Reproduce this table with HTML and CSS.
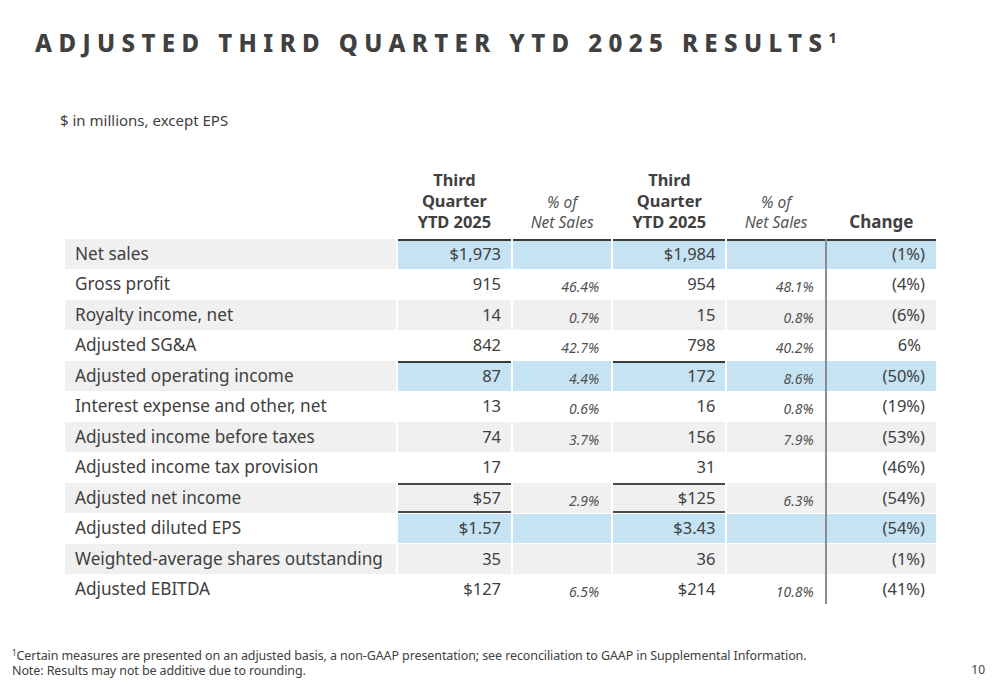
FILE: index.html
```html
<!DOCTYPE html>
<html>
<head>
<meta charset="utf-8">
<link rel="stylesheet" href="styles.css">
</head>
<body>
<div class="page">
  <h1 class="title">ADJUSTED THIRD QUARTER YTD 2025 RESULTS<sup class="title-sup">1</sup></h1>
  <p class="subtitle">$ in millions, except EPS</p>
  <table class="results">
    <colgroup>
      <col class="c-label"><col class="c-val"><col class="c-pct"><col class="c-val2"><col class="c-pct2"><col class="c-chg">
    </colgroup>
    <thead>
      <tr>
        <th></th>
        <th class="h-main">Third<br>Quarter<br>YTD 2025</th>
        <th class="h-pct">% of<br>Net Sales</th>
        <th class="h-main">Third<br>Quarter<br>YTD 2025</th>
        <th class="h-pct">% of<br>Net Sales</th>
        <th class="h-main h-chg">Change</th>
      </tr>
    </thead>
    <tbody>
      <tr class="gray hl top-all">
        <td class="lbl">Net sales</td><td class="val">$1,973</td><td class="pct"></td><td class="val">$1,984</td><td class="pct"></td><td class="chg">(1%)</td>
      </tr>
      <tr>
        <td class="lbl">Gross profit</td><td class="val">915</td><td class="pct">46.4%</td><td class="val">954</td><td class="pct">48.1%</td><td class="chg">(4%)</td>
      </tr>
      <tr class="gray">
        <td class="lbl">Royalty income, net</td><td class="val">14</td><td class="pct">0.7%</td><td class="val">15</td><td class="pct">0.8%</td><td class="chg">(6%)</td>
      </tr>
      <tr>
        <td class="lbl">Adjusted SG&amp;A</td><td class="val">842</td><td class="pct">42.7%</td><td class="val">798</td><td class="pct">40.2%</td><td class="chg"><span class="pos">6%</span></td>
      </tr>
      <tr class="gray hl top-vals">
        <td class="lbl">Adjusted operating income</td><td class="val">87</td><td class="pct">4.4%</td><td class="val">172</td><td class="pct">8.6%</td><td class="chg">(50%)</td>
      </tr>
      <tr>
        <td class="lbl">Interest expense and other, net</td><td class="val">13</td><td class="pct">0.6%</td><td class="val">16</td><td class="pct">0.8%</td><td class="chg">(19%)</td>
      </tr>
      <tr class="gray">
        <td class="lbl">Adjusted income before taxes</td><td class="val">74</td><td class="pct">3.7%</td><td class="val">156</td><td class="pct">7.9%</td><td class="chg">(53%)</td>
      </tr>
      <tr>
        <td class="lbl">Adjusted income tax provision</td><td class="val">17</td><td class="pct"></td><td class="val">31</td><td class="pct"></td><td class="chg">(46%)</td>
      </tr>
      <tr class="gray box-vals">
        <td class="lbl">Adjusted net income</td><td class="val">$57</td><td class="pct">2.9%</td><td class="val">$125</td><td class="pct">6.3%</td><td class="chg">(54%)</td>
      </tr>
      <tr class="hl">
        <td class="lbl">Adjusted diluted EPS</td><td class="val">$1.57</td><td class="pct"></td><td class="val">$3.43</td><td class="pct"></td><td class="chg">(54%)</td>
      </tr>
      <tr class="gray">
        <td class="lbl">Weighted-average shares outstanding</td><td class="val">35</td><td class="pct"></td><td class="val">36</td><td class="pct"></td><td class="chg">(1%)</td>
      </tr>
      <tr>
        <td class="lbl">Adjusted EBITDA</td><td class="val">$127</td><td class="pct">6.5%</td><td class="val">$214</td><td class="pct">10.8%</td><td class="chg">(41%)</td>
      </tr>
    </tbody>
  </table>
  <footer class="foot">
    <div class="notes">
      <p class="note"><sup class="note-sup">1</sup>Certain measures are presented on an adjusted basis, a non-GAAP presentation; see reconciliation to GAAP in Supplemental Information.</p>
      <p class="note">Note: Results may not be additive due to rounding.</p>
    </div>
    <div class="page-num">10</div>
  </footer>
</div>
</body>
</html>
```

FILE: styles.css
```css
html, body {
  margin: 0;
  padding: 0;
  background: #ffffff;
}
body {
  font-family: "Noto Sans", "Open Sans", sans-serif;
  color: #404040;
}
.page {
  width: 1000px;
  height: 685px;
  display: flex;
  flex-direction: column;
  box-sizing: border-box;
}
.title {
  margin: 26px 0 0 35px;
  font-size: 24px;
  line-height: 34px;
  font-weight: 800;
  letter-spacing: 6.4px;
  color: #404040;
  white-space: nowrap;
}
.title-sup {
  font-size: 14px;
  letter-spacing: 0;
  vertical-align: 9px;
  line-height: 0;
  margin-left: 0;
}
.subtitle {
  margin: 50px 0 0 60px;
  font-size: 15px;
  line-height: 20px;
}
.results {
  margin: 38px 0 0 63px;
  border-collapse: separate;
  border-spacing: 2px 1px;
  table-layout: fixed;
  width: 875px;
  font-size: 16.5px;
}
.c-label { width: 330px; }
.c-val { width: 113px; }
.c-pct { width: 98px; }
.c-val2 { width: 112px; }
.c-pct2 { width: 97px; }
.c-chg { width: 109px; }

.results th {
  vertical-align: bottom;
  text-align: center;
  padding: 0 0 6px 0;
}
.h-main {
  font-size: 16.4px;
  font-weight: 700;
  line-height: 21px;
  color: #404040;
}
.h-chg {
  font-size: 17px;
}
.h-pct {
  font-size: 15.5px;
  font-weight: 400;
  font-style: italic;
  line-height: 20px;
  color: #555555;
  padding-bottom: 6px !important;
}
.results tbody tr {
  height: 29.5px;
}
.results td {
  padding: 0;
  line-height: 20px;
}
.results .lbl {
  padding-left: 10px;
  text-align: left;
  font-size: 17.2px;
}
.results .val {
  text-align: right;
  padding-right: 10px;
}
.results .pct {
  text-align: right;
  padding-right: 12px;
  font-size: 14px;
  font-style: italic;
  vertical-align: bottom;
  line-height: 24px;
  color: #505050;
}
.results td.pct:nth-child(5) {
  padding-right: 11px;
}
.results .chg {
  text-align: right;
  padding-right: 11px;
  position: relative;
}
.results .chg::before {
  content: "";
  position: absolute;
  left: -2px;
  top: -1px;
  bottom: 0;
  width: 2px;
  background: #8c8c8c;
}
.results tr:first-child .chg::before {
  top: 0;
}
.pos {
  padding-right: 4px;
}
.gray td {
  background: #f0f0f0;
}
.hl td:not(.lbl) {
  background: #c5e3f3;
}
.top-all td:not(.lbl) {
  box-shadow: inset 0 2px 0 #3a3a3a;
}
.top-vals td.val {
  box-shadow: inset 0 2px 0 #3a3a3a;
}
.box-vals td.val {
  box-shadow: inset 0 2px 0 #4a4a4a, inset 0 -2px 0 #4a4a4a;
}
.foot {
  margin-top: auto;
  display: flex;
  align-items: flex-end;
  justify-content: space-between;
  padding: 0 15px 7px 12px;
}
.notes {
  font-size: 12.5px;
  line-height: 15px;
  letter-spacing: -0.1px;
}
.note {
  margin: 0;
}
.note-sup {
  font-size: 8px;
  vertical-align: 4px;
  line-height: 0;
}
.page-num {
  font-size: 12px;
  line-height: 16px;
}
```
